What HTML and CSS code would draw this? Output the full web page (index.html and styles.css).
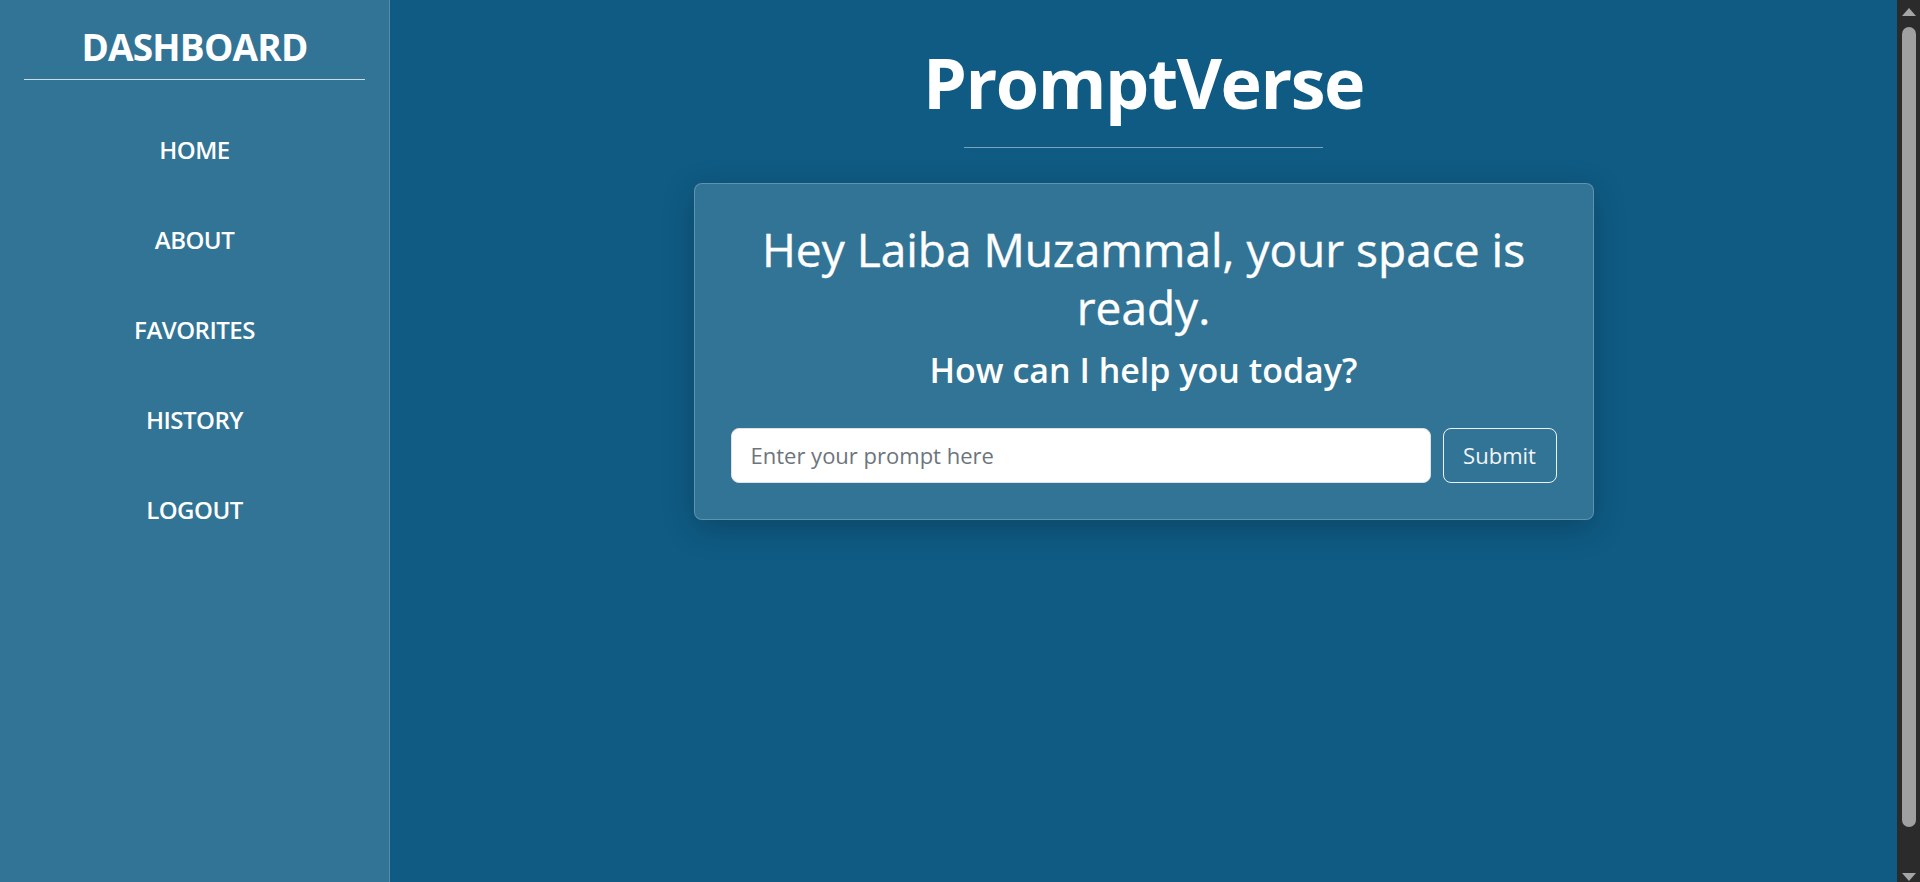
FILE: index.html
```html
<!DOCTYPE html>
<html lang="en">
<head>
<meta charset="utf-8">
<title>PromptVerse - Dashboard</title>
<link rel="stylesheet" href="styles.css">
</head>
<body>
<div class="layout">
  <aside class="sidebar">
    <h2 class="brand">DASHBOARD</h2>
    <nav class="nav">
      <a class="nav-link" href="#">HOME</a>
      <a class="nav-link" href="#">ABOUT</a>
      <a class="nav-link" href="#">FAVORITES</a>
      <a class="nav-link" href="#">HISTORY</a>
      <a class="nav-link" href="#">LOGOUT</a>
    </nav>
  </aside>
  <main class="main">
    <h1 class="title">PromptVerse</h1>
    <hr class="title-rule">
    <section class="card">
      <h2 class="greet">Hey Laiba Muzammal, your space is ready.</h2>
      <h3 class="ask">How can I help you today?</h3>
      <form class="prompt-form">
        <input class="prompt-input" type="text" placeholder="Enter your prompt here">
        <button class="submit-btn" type="button">Submit</button>
      </form>
    </section>
  </main>
  <div class="scrollbar" aria-hidden="true">
    <span class="scroll-arrow scroll-arrow-up"></span>
    <span class="scroll-thumb"></span>
    <span class="scroll-arrow scroll-arrow-down"></span>
  </div>
</div>
</body>
</html>
```

FILE: styles.css
```css
html, body {
  margin: 0;
  padding: 0;
  height: 100%;
  overflow: hidden;
}

body {
  font-family: "Open Sans", "Noto Sans", sans-serif;
  background: #0f5b84;
  color: #fff;
}

.layout {
  display: flex;
  height: 100vh;
}

.sidebar {
  width: 389px;
  flex: 0 0 389px;
  background: #327496;
  border-right: 1px solid rgba(255, 255, 255, 0.18);
  display: flex;
  flex-direction: column;
}

.brand {
  margin: 0 24px;
  padding: 24px 0 9px;
  font-size: 37px;
  line-height: 46px;
  font-weight: 700;
  letter-spacing: -0.8px;
  text-align: center;
  border-bottom: 1px solid rgba(255, 255, 255, 0.75);
}

.nav {
  display: flex;
  flex-direction: column;
  margin-top: 25px;
}

.nav-link {
  display: block;
  padding: 30px 0;
  line-height: 30px;
  font-size: 24px;
  font-weight: 600;
  letter-spacing: -0.5px;
  color: #fff;
  text-decoration: none;
  text-align: center;
}

.main {
  flex: 1;
  display: flex;
  flex-direction: column;
  align-items: center;
  padding-top: 38px;
}

.title {
  margin: 0;
  font-size: 70px;
  line-height: 89px;
  font-weight: 700;
  letter-spacing: -1.5px;
}

.title-rule {
  width: 359px;
  margin: 20px 0 0;
  border: 0;
  border-top: 1px solid rgba(255, 255, 255, 0.45);
}

.card {
  box-sizing: border-box;
  width: 900px;
  margin-top: 35px;
  padding: 36px;
  background: #327496;
  border: 1px solid rgba(255, 255, 255, 0.22);
  border-radius: 8px;
  box-shadow: 0 8px 32px rgba(0, 0, 0, 0.22);
  text-align: center;
}

.greet {
  margin: 1px 0 0;
  font-size: 46px;
  line-height: 57.6px;
  font-weight: 400;
  -webkit-text-stroke: 0.4px #fff;
}

.ask {
  margin: 15px 0 0;
  font-size: 34px;
  line-height: 38.4px;
  font-weight: 600;
}

.prompt-form {
  display: flex;
  gap: 12px;
  margin-top: 38px;
}

.prompt-input {
  flex: 1;
  box-sizing: border-box;
  height: 55px;
  padding: 0 19px;
  border: 1px solid #dee2e6;
  border-radius: 8px;
  background: #fff;
  font-family: "Open Sans", "Noto Sans", sans-serif;
  font-size: 22px;
  color: #212529;
  outline: none;
}

.prompt-input::placeholder {
  color: #6c757d;
}

.submit-btn {
  box-sizing: border-box;
  width: 114px;
  height: 55px;
  border: 1px solid rgba(255, 255, 255, 0.9);
  border-radius: 8px;
  background: transparent;
  color: #f2f5f7;
  font-family: "Open Sans", "Noto Sans", sans-serif;
  font-size: 22px;
  cursor: pointer;
}

.scrollbar {
  flex: 0 0 23px;
  box-sizing: border-box;
  width: 23px;
  padding: 8px 4px 1px 5px;
  background: #2b2b2b;
  display: flex;
  flex-direction: column;
  align-items: center;
}

.scroll-arrow {
  display: block;
  width: 0;
  height: 0;
  border-left: 7px solid transparent;
  border-right: 7px solid transparent;
}

.scroll-arrow-up {
  border-bottom: 8px solid #a5a5a5;
}

.scroll-arrow-down {
  border-top: 8px solid #a5a5a5;
}

.scroll-thumb {
  display: block;
  width: 14px;
  flex: 1;
  margin: 11px 0 46px;
  background: #a0a0a0;
  border-radius: 7px;
}
```
